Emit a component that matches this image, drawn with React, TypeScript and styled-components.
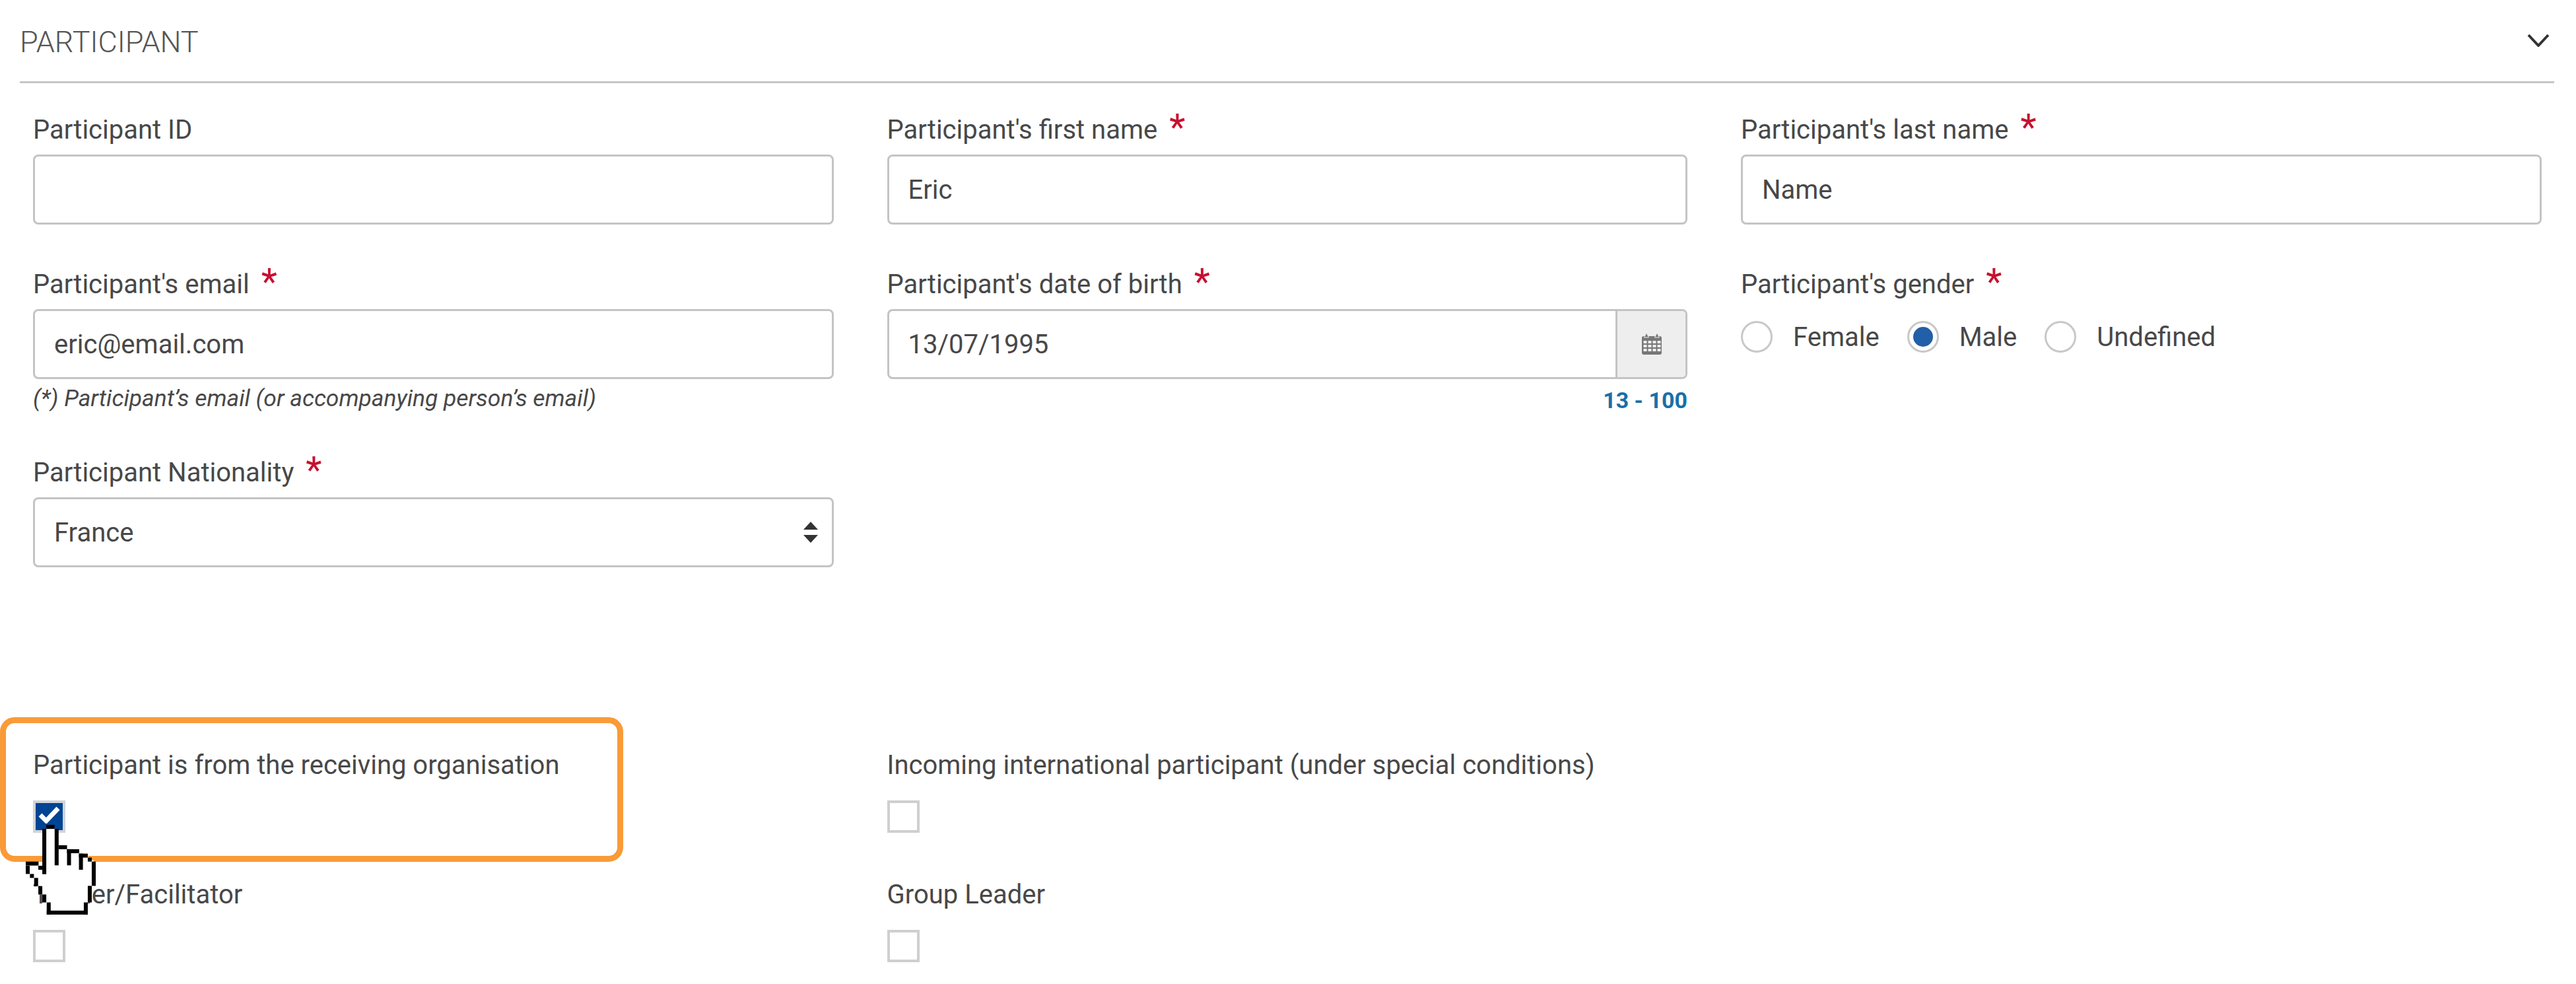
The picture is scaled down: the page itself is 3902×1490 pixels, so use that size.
import React from "react";
import styled, { createGlobalStyle } from "styled-components";

const Global = createGlobalStyle`
  html, body { margin: 0; padding: 0; background: #fff; }
  body { font-family: Roboto, "Liberation Sans", sans-serif; color: #484848; }
`;

const Page = styled.div`
  position: relative;
  width: 3902px;
  height: 1490px;
  overflow: hidden;
  background: #fff;
`;

const SectionHeader = styled.div`
  margin-left: 30px;
  width: 3839px;
  height: 126px;
  box-sizing: border-box;
  border-bottom: 3px solid #c6c6c6;
  display: flex;
  align-items: center;
  justify-content: space-between;
  padding: 0 7px 0 0;
`;

const SectionTitle = styled.div`
  font-size: 45px;
  font-weight: 300;
  line-height: 1;
  color: #555;
  position: relative;
  top: 2px;
`;

const Chevron = styled.svg`
  width: 34px;
  height: 20px;
  margin-top: -1px;
`;

const FormGrid = styled.div`
  display: grid;
  grid-template-columns: repeat(3, 1212.5px);
  column-gap: 81px;
  row-gap: 61px;
  padding: 41px 0 0 50px;
`;

const Field = styled.div`
  display: flex;
  flex-direction: column;
  min-width: 0;
`;

const Label = styled.div`
  font-size: 40px;
  line-height: 60px;
  height: 60px;
  white-space: nowrap;
  color: #484848;
`;

const Star = styled.span`
  color: #c8102e;
  font-size: 56px;
  line-height: 40px;
  margin-left: 18px;
  position: relative;
  top: 2px;
`;

const Control = styled.div`
  margin-top: 7px;
  height: 106px;
  box-sizing: border-box;
  border: 3px solid #c4c4c4;
  border-radius: 8px;
  display: flex;
  align-items: center;
  justify-content: space-between;
  padding-left: 29px;
  font-size: 40px;
  color: #484848;
  background: #fff;
  overflow: hidden;
`;

const Addon = styled.div`
  align-self: stretch;
  width: 103px;
  background: #eee;
  border-left: 3px solid #c4c4c4;
  display: flex;
  align-items: center;
  justify-content: center;
`;

const Helper = styled.div`
  font-size: 35.4px;
  font-style: italic;
  line-height: 40px;
  height: 51px;
  padding-top: 9px;
  box-sizing: border-box;
  color: #484848;
  white-space: nowrap;
`;

const RangeHint = styled.div`
  font-size: 34px;
  font-weight: 700;
  line-height: 40px;
  height: 51px;
  padding-top: 12px;
  box-sizing: border-box;
  text-align: right;
  color: #1a6fa8;
`;

const RadioRow = styled.div`
  display: flex;
  align-items: center;
  height: 48px;
  margin-top: 25px;
`;

const RadioOption = styled.div`
  display: flex;
  align-items: center;
  margin-right: 42px;
  font-size: 40px;
  color: #484848;
`;

const RadioCircle = styled.div<{ $on?: boolean }>`
  width: 48px;
  height: 48px;
  box-sizing: border-box;
  border: 3px solid #c8c8c8;
  border-radius: 50%;
  margin-right: 31px;
  display: flex;
  align-items: center;
  justify-content: center;
  &::after {
    content: "";
    width: 30px;
    height: 30px;
    border-radius: 50%;
    background: ${(p) => (p.$on ? "#215fa8" : "transparent")};
  }
`;

const SelectArrows = styled.svg`
  width: 24px;
  height: 36px;
  margin-right: 20px;
`;

const CheckGrid = styled.div`
  display: grid;
  grid-template-columns: repeat(2, 1212.5px);
  column-gap: 81px;
  row-gap: 64px;
  padding: 270px 0 0 50px;
`;

const CheckBox = styled.div<{ $checked?: boolean }>`
  margin-top: 23px;
  width: 49px;
  height: 49px;
  box-sizing: border-box;
  border: 4px solid ${(p) => (p.$checked ? "#d0d4da" : "#cfcfcf")};
  background: ${(p) => (p.$checked ? "#004494" : "#fff")};
  display: flex;
  align-items: center;
  justify-content: center;
  padding-bottom: 6px;
`;

const Highlight = styled.div`
  position: absolute;
  left: 0;
  top: 1086px;
  width: 944px;
  height: 219px;
  box-sizing: border-box;
  border: 9px solid #f99b38;
  border-radius: 22px;
  pointer-events: none;
`;

const Pointer = styled.svg`
  position: absolute;
  left: 39px;
  top: 1248px;
  width: 106px;
  height: 138px;
`;

const blacks: [number, number, number, number][] = [
  [210, 205, 38, 18], [192, 223, 18, 205], [248, 223, 18, 165], [266, 297, 38, 18],
  [304, 315, 18, 73], [304, 315, 55, 18], [358, 335, 18, 73], [358, 335, 40, 18],
  [398, 353, 18, 18], [416, 371, 18, 110], [398, 481, 18, 75], [380, 556, 18, 55],
  [212, 593, 185, 18], [212, 556, 18, 55], [192, 520, 18, 36], [174, 482, 18, 38],
  [155, 445, 18, 37], [136, 427, 18, 18], [117, 390, 18, 37], [117, 371, 58, 18],
  [174, 390, 18, 18],
];

const Req = () => <Star>*</Star>;

const CalendarIcon = () => (
  <svg width="32" height="34" viewBox="0 0 32 34">
    <rect x="1" y="5" width="30" height="28" rx="3" fill="#777" />
    <path d="M8 0l3.5 7h-7zM24 0l3.5 7h-7z" fill="#777" stroke="#eee" strokeWidth="1" />
    <g fill="#eee">
      {[3.5, 10.5, 17.5, 24.5].map((x) =>
        [12, 18, 24].map((y) => <rect key={`${x}-${y}`} x={x} y={y} width="5" height="4" />)
      )}
    </g>
  </svg>
);

export default function App() {
  return (
    <Page>
      <Global />
      <SectionHeader>
        <SectionTitle>PARTICIPANT</SectionTitle>
        <Chevron viewBox="0 0 34 20">
          <polyline points="2,2 17,18 32,2" fill="none" stroke="#333" strokeWidth="4" />
        </Chevron>
      </SectionHeader>
      <FormGrid>
        <Field>
          <Label>Participant ID</Label>
          <Control />
        </Field>
        <Field>
          <Label>Participant's first name<Req /></Label>
          <Control>Eric</Control>
        </Field>
        <Field>
          <Label>Participant's last name<Req /></Label>
          <Control>Name</Control>
        </Field>
        <Field>
          <Label>Participant's email<Req /></Label>
          <Control>eric@email.com</Control>
          <Helper>(*) Participant’s email (or accompanying person’s email)</Helper>
        </Field>
        <Field>
          <Label>Participant's date of birth<Req /></Label>
          <Control>
            13/07/1995
            <Addon><CalendarIcon /></Addon>
          </Control>
          <RangeHint>13 - 100</RangeHint>
        </Field>
        <Field>
          <Label>Participant's gender<Req /></Label>
          <RadioRow>
            <RadioOption><RadioCircle />Female</RadioOption>
            <RadioOption><RadioCircle $on />Male</RadioOption>
            <RadioOption><RadioCircle />Undefined</RadioOption>
          </RadioRow>
        </Field>
        <Field>
          <Label>Participant Nationality<Req /></Label>
          <Control>
            France
            <SelectArrows viewBox="0 0 24 36">
              <path d="M12 2L23 14H1zM12 34L1 22H23z" fill="#333" />
            </SelectArrows>
          </Control>
        </Field>
      </FormGrid>
      <CheckGrid>
        <Field>
          <Label>Participant is from the receiving organisation</Label>
          <CheckBox $checked>
            <svg width="33" height="27" viewBox="0 0 33 27">
              <polyline points="3,14 12,23 30,4" fill="none" stroke="#fff" strokeWidth="7" />
            </svg>
          </CheckBox>
        </Field>
        <Field>
          <Label>Incoming international participant (under special conditions)</Label>
          <CheckBox />
        </Field>
        <Field>
          <Label>Trainer/Facilitator</Label>
          <CheckBox />
        </Field>
        <Field>
          <Label>Group Leader</Label>
          <CheckBox />
        </Field>
      </CheckGrid>
      <Highlight />
      <Pointer viewBox="117 205 317 406">
        <path
          d="M210 215H248V300H300V325H355V345H400V365H425V481H405V556H388V600H221V556H201V520H183V482H164V445H145V427H126V380H175V400H200z"
          fill="#fff"
        />
        {blacks.map(([x, y, w, h]) => (
          <rect key={`${x}-${y}-${w}`} x={x} y={y} width={w} height={h} fill="#000" />
        ))}
      </Pointer>
    </Page>
  );
}
